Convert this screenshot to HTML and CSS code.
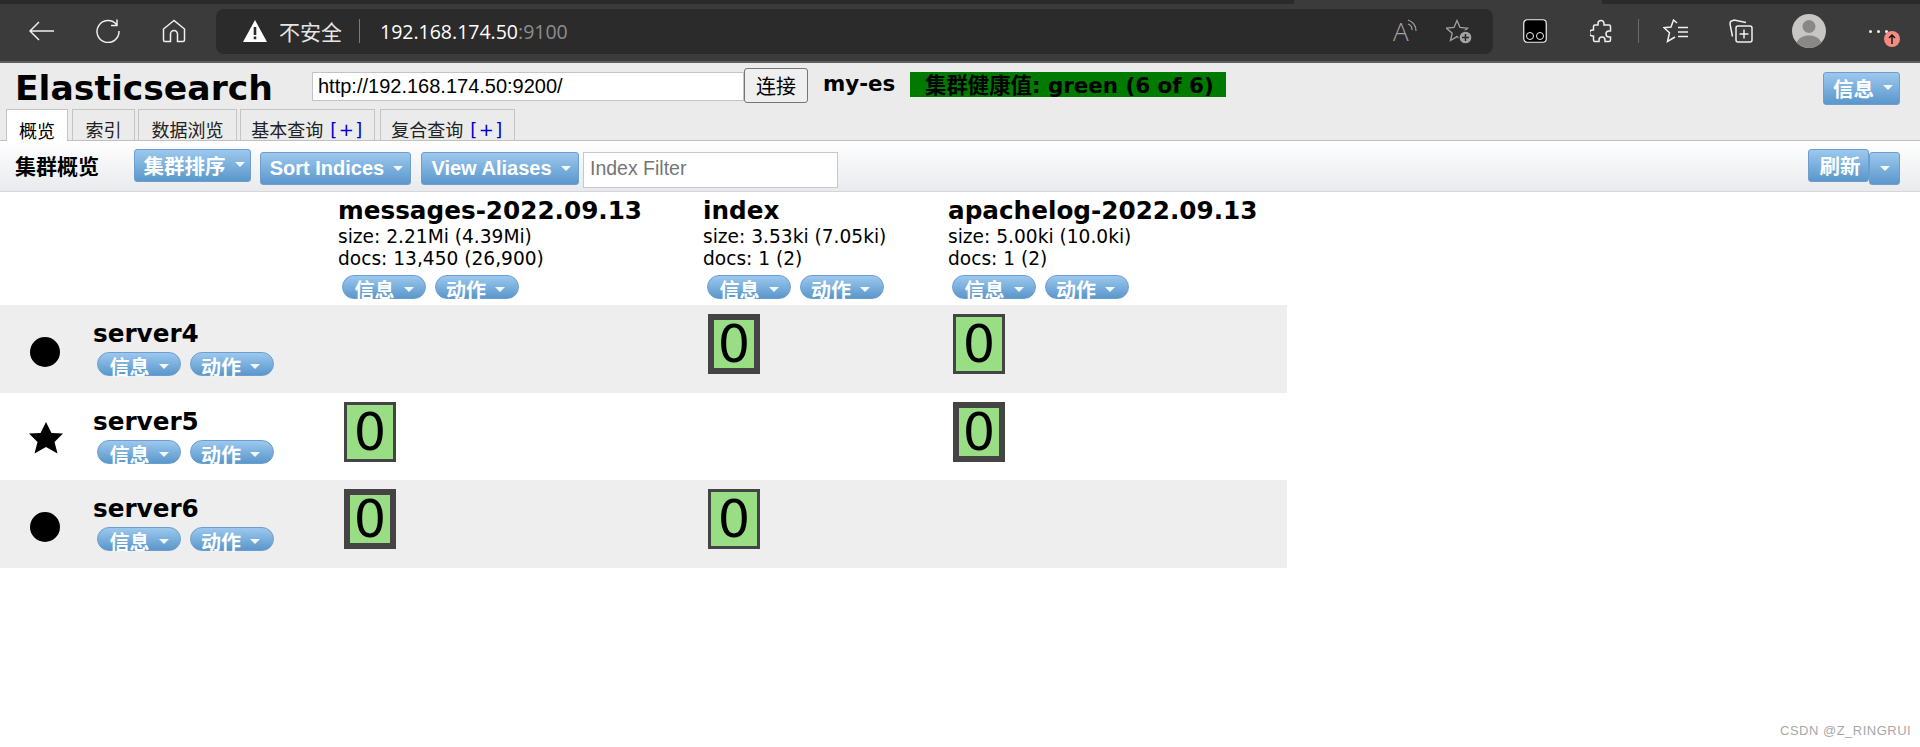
FILE: index.html
```html
<!DOCTYPE html>
<html lang="zh">
<head>
<meta charset="utf-8">
<title>Elasticsearch</title>
<link rel="stylesheet" href="styles.css">
</head>
<body>
<div class="chrome">
  <div class="tabstrip"><div class="strip-left"></div><div class="strip-active"></div><div class="strip-right"></div></div>
  <div class="toolbar">
    <svg class="ic ic-back" viewBox="0 0 25 20"><path d="M10 1 1 10l9 9M1 10h24"/></svg>
    <svg class="ic ic-reload" viewBox="0 0 24 24"><path d="M20.5 5.5A11 11 0 1 0 23 12M21 .5v6h-6"/></svg>
    <svg class="ic ic-home" viewBox="0 0 24 24"><path d="M12 1.5 1.5 10v11a1.5 1.5 0 0 0 1.5 1.5h5.5V15a3.500 3.500 0 0 1 7 0v7.500H21a1.500 1.500 0 0 0 1.500-1.500V10z"/></svg>
    <div class="address">
      <svg class="warn" viewBox="0 0 24 22"><path class="warn-fill" d="M12 0 24 22H0z"/><path class="warn-mark" d="M10.700 7h2.600v8h-2.600zM10.700 16.500h2.600v2.700h-2.600z"/></svg>
      <span class="insecure">不安全</span>
      <span class="addr-sep"></span>
      <span class="url">192.168.174.50<span class="port">:9100</span></span>
      <span class="addr-fill"></span>
      <span class="read-icon"><span class="read-a">A</span><svg class="read-waves" viewBox="0 0 10 14"><path d="M1 1a11 11 0 0 1 8 11M1 5a6 6 0 0 1 4 6"/></svg></span>
      <svg class="ic-dim ic-staradd" viewBox="0 0 26 25"><path d="M11 1.500 14 8.500l7.500.7-5.700 5 1.700 7.300-6.500-3.900-6.500 3.900 1.700-7.300-5.700-5L8 8.500z"/><circle class="badge-dot" cx="19.500" cy="18.500" r="6.500"/><path class="badge-plus" d="M19.500 15v7M16 18.500h7"/></svg>
    </div>
    <svg class="ext ext-eyes" viewBox="0 0 24 24"><rect class="eyes-box" x=".75" y=".75" width="22.500" height="22.500" rx="3.500"/><circle class="eyes-ring" cx="7" cy="17" r="3.500"/><circle class="eyes-ring" cx="17" cy="17" r="3.500"/></svg>
    <svg class="ic ic-puzzle" viewBox="0 0 22 24"><path d="M8 4.500a3 3 0 0 1 6 0V6h5a1.500 1.500 0 0 1 1.500 1.500V12H19a3 3 0 0 0 0 6h1.500v3a1.500 1.500 0 0 1-1.500 1.500h-4V21a3 3 0 0 0-6 0v1.500H5A1.500 1.500 0 0 1 3.500 21v-4H2.500a3 3 0 0 1 0-6h1V7.500A1.500 1.500 0 0 1 5 6h3z"/></svg>
    <span class="tool-sep"></span>
    <svg class="ic ic-favs" viewBox="0 0 25 24"><path d="M14 4 10.500 1 8 8 1 8.700l5.500 5L4.500 22.500l7.500-4.500M15 8.500h10M15 13h10M15 17.500h10"/></svg>
    <svg class="ic ic-coll" viewBox="0 0 24 24"><path d="M17 3.500 5 1 1.500 2.500 1 5l2.500 12.500M9 7h12a2 2 0 0 1 2 2v12a2 2 0 0 1-2 2H9a2 2 0 0 1-2-2V9a2 2 0 0 1 2-2zM15 10.500v9M10.500 15h9"/></svg>
    <svg class="avatar" viewBox="0 0 34 34"><circle class="av-bg" cx="17" cy="17" r="17"/><circle class="av-fg" cx="17" cy="12.500" r="6.500"/><path class="av-fg" d="M4.500 28.500C7 24 11 21.500 17 21.500s10 2.500 12.500 7A17 17 0 0 1 17 34 17 17 0 0 1 4.500 28.500z"/></svg>
    <div class="more">
      <span class="dot"></span><span class="dot"></span><span class="dot"></span>
      <svg class="update" viewBox="0 0 18 16"><circle class="upd-bg" cx="9" cy="8" r="8"/><path class="upd-arrow" d="M9 13V4M6 7l3-3 3 3"/></svg>
    </div>
  </div>
</div>

<header class="head">
  <div class="head-top">
    <h1 class="brand">Elasticsearch</h1>
    <input class="conn-input" type="text" value="http://192.168.174.50:9200/">
    <button class="conn-btn">连接</button>
    <span class="cluster-name">my-es</span>
    <span class="health">集群健康值: green (6 of 6)</span>
    <span class="head-fill"></span>
    <span class="btn btn-cjk btn-info-top">信息<i class="caret"></i></span>
  </div>
  <nav class="tabs">
    <span class="tab tab-1 active">概览</span>
    <span class="tab tab-2">索引</span>
    <span class="tab tab-3">数据浏览</span>
    <span class="tab tab-4">基本查询 <b class="plus">[+]</b></span>
    <span class="tab tab-4 tab-5">复合查询 <b class="plus">[+]</b></span>
  </nav>
</header>

<div class="bar">
  <h2 class="bar-title">集群概览</h2>
  <span class="btn btn-cjk btn-sort">集群排序<i class="caret"></i></span>
  <span class="btn btn-indices">Sort Indices<i class="caret"></i></span>
  <span class="btn btn-alias">View Aliases<i class="caret"></i></span>
  <input class="filter" type="text" placeholder="Index Filter">
  <span class="head-fill"></span>
  <span class="btn btn-cjk btn-refresh">刷新</span>
  <span class="btn btn-refresh-menu"><i class="caret"></i></span>
</div>

<main class="cluster">
  <div class="grid head-row">
    <div></div>
    <div class="idx">
      <h3>messages-2022.09.13</h3>
      <p>size: 2.21Mi (4.39Mi)</p>
      <p>docs: 13,450 (26,900)</p>
      <div class="pills"><span class="pill">信息<i class="caret"></i></span><span class="pill">动作<i class="caret"></i></span></div>
    </div>
    <div class="idx">
      <h3>index</h3>
      <p>size: 3.53ki (7.05ki)</p>
      <p>docs: 1 (2)</p>
      <div class="pills"><span class="pill">信息<i class="caret"></i></span><span class="pill">动作<i class="caret"></i></span></div>
    </div>
    <div class="idx">
      <h3>apachelog-2022.09.13</h3>
      <p>size: 5.00ki (10.0ki)</p>
      <p>docs: 1 (2)</p>
      <div class="pills"><span class="pill">信息<i class="caret"></i></span><span class="pill">动作<i class="caret"></i></span></div>
    </div>
  </div>

  <div class="grid row shade row-a">
    <div class="node">
      <span class="node-ic"><span class="circle"></span></span>
      <div class="node-info"><h3>server4</h3><div class="pills"><span class="pill">信息<i class="caret"></i></span><span class="pill">动作<i class="caret"></i></span></div></div>
    </div>
    <div></div>
    <div><span class="shard primary">0</span></div>
    <div><span class="shard">0</span></div>
  </div>

  <div class="grid row">
    <div class="node">
      <span class="node-ic"><svg class="star" viewBox="0 0 34 32"><path d="M17 0l5.500 11 11.500.5-8.500 8.500 3 11.500L17 25 5.500 31.500l3-11.500L0 11.500 11.500 11z"/></svg></span>
      <div class="node-info"><h3>server5</h3><div class="pills"><span class="pill">信息<i class="caret"></i></span><span class="pill">动作<i class="caret"></i></span></div></div>
    </div>
    <div><span class="shard">0</span></div>
    <div></div>
    <div><span class="shard primary">0</span></div>
  </div>

  <div class="grid row shade row-a">
    <div class="node">
      <span class="node-ic"><span class="circle"></span></span>
      <div class="node-info"><h3>server6</h3><div class="pills"><span class="pill">信息<i class="caret"></i></span><span class="pill">动作<i class="caret"></i></span></div></div>
    </div>
    <div><span class="shard primary">0</span></div>
    <div><span class="shard">0</span></div>
    <div></div>
  </div>
</main>

<div class="watermark">CSDN @Z_RINGRUI</div>
</body>
</html>
```
FILE: styles.css
```css
* { box-sizing: border-box; }
html, body { margin: 0; padding: 0; }
body {
  width: 1920px;
  height: 747px;
  overflow: hidden;
  background: #fff;
  color: #000;
  font-family: "DejaVu Sans", Verdana, "Noto Sans CJK SC", sans-serif;
}

/* browser chrome */
.chrome { height: 63px; background: #3b3b3b; border-bottom: 2px solid #5f5f5f; }
.tabstrip { height: 4px; display: flex; }
.strip-left { width: 1294px; background: #2a2a2a; }
.strip-active { width: 308px; background: #3b3b3b; }
.strip-right { flex: 1; background: #2a2a2a; }
.toolbar { height: 57px; display: flex; align-items: center; position: relative; }
.ic { fill: none; stroke: #f0f0f0; stroke-width: 1.500; flex: none; }
.ic-back { width: 25px; height: 20px; margin: -3px 0 0 29px; }
.ic-reload { width: 24px; height: 24px; margin: -3px 0 0 42px; }
.ic-home { width: 24px; height: 24px; margin: -3px 0 0 42px; }
.address {
  width: 1277px; height: 45px; margin: -3px 0 0 30px;
  background: #2b2b2b; border-radius: 8px;
  display: flex; align-items: center; padding-left: 27px;
}
.warn { width: 24px; height: 22px; flex: none; }
.warn-fill { fill: #fff; }
.warn-mark { fill: #2b2b2b; }
.insecure { margin-left: 12px; font: 21px "Noto Sans CJK SC", sans-serif; color: #e6e6e6; }
.addr-sep { width: 1px; height: 24px; background: #7a7a7a; margin-left: 17px; }
.url { margin-left: 20px; font: 19.500px "Open Sans", sans-serif; color: #fff; }
.port { color: #8d8d8d; }
.addr-fill { flex: 1; }
.read-icon { width: 24px; height: 24px; position: relative; flex: none; }
.read-a { font: 300 26px/24px "Open Sans", sans-serif; color: #a3a3a3; position: absolute; left: 0; top: 0; }
.read-waves { width: 10px; height: 14px; position: absolute; right: 0; top: 0; fill: none; stroke: #a3a3a3; stroke-width: 1.200; }
.ic-dim { fill: none; stroke: #a3a3a3; stroke-width: 1.300; flex: none; }
.ic-staradd { width: 26px; height: 25px; margin: 0 21px 0 29px; }
.badge-dot { fill: #a3a3a3; stroke: #2b2b2b; }
.badge-plus { stroke: #2b2b2b; stroke-width: 1.600; }
.ext-eyes { width: 24px; height: 24px; margin: -3px 0 0 30px; flex: none; }
.eyes-box { fill: #000; stroke: #f0f0f0; stroke-width: 1.200; }
.eyes-ring { fill: none; stroke: #f0f0f0; stroke-width: 1; }
.ic-puzzle { width: 22px; height: 24px; margin: -3px 0 0 43px; }
.tool-sep { width: 1px; height: 24px; background: #6a6a6a; margin: -3px 0 0 26px; flex: none; }
.ic-favs { width: 25px; height: 24px; margin: -3px 0 0 24px; }
.ic-coll { width: 24px; height: 24px; margin: -3px 0 0 41px; }
.avatar { width: 34px; height: 34px; margin: -3px 0 0 39px; flex: none; }
.av-bg { fill: #c8c6c4; }
.av-fg { fill: #8a8886; }
.more { position: relative; width: 32px; height: 20px; margin: -3px 0 0 43px; display: flex; gap: 5px; align-items: center; flex: none; }
.dot { width: 3px; height: 3px; background: #f0f0f0; border-radius: 50%; }
.update { width: 18px; height: 16px; position: absolute; left: 14px; top: 10px; }
.upd-bg { fill: #f28b82; }
.upd-arrow { fill: none; stroke: #111; stroke-width: 1.400; }

/* app header */
.head { height: 78px; background: #ebebeb; border-bottom: 1px solid #c0c0c0; display: flex; flex-direction: column; position: relative; }
.head-top { height: 47px; display: flex; align-items: flex-start; }
.brand { margin: 5px 0 0 15px; width: 297px; font: bold 34.600px/40px "DejaVu Sans", Verdana, sans-serif; }
.conn-input {
  width: 432px; height: 29px; margin-top: 9px; padding: 0 5px;
  border: 1px solid #c4c4c4; background: #fff;
  font: 20px "Liberation Sans", Arial, sans-serif; color: #000;
}
.conn-btn {
  width: 64px; height: 35px; margin-top: 5px; padding: 0;
  border: 1px solid #767676; border-radius: 3px; background: #efefef;
  font: 20px "Noto Sans CJK SC", sans-serif; color: #000;
}
.cluster-name { margin: 9px 0 0 15px; width: 87px; font: bold 21.400px/24px "DejaVu Sans", Verdana, sans-serif; }
.health {
  margin-top: 9px; width: 316px; height: 25px; padding: 1px 0 0 15px;
  background: #007a00; white-space: nowrap;
  font: bold 21.400px/25px "DejaVu Sans", Verdana, "Noto Sans CJK SC", sans-serif;
}
.head-fill { flex: 1; }

.btn {
  display: flex; align-items: center; justify-content: center; flex: none;
  height: 33px; padding: 0 0 1px 2px; color: #fff; white-space: nowrap;
  border: 1px solid #6e9dd2; border-radius: 3px;
  background: linear-gradient(#9cc8ee, #5a97cb);
  font: bold 20px "Liberation Sans", Arial, "Noto Sans CJK SC", sans-serif;
}
.btn-cjk { font-size: 20.500px; padding: 0 0 2px 3px; }
.caret {
  display: inline-block; width: 0; height: 0; margin-left: 9px;
  border-left: 5px solid transparent; border-right: 5px solid transparent;
  border-top: 5.500px solid #fff; opacity: .9;
}
.btn-info-top { width: 77px; margin: 9px 20px 0 0; }
.btn-refresh-menu { padding: 0; }

.tabs { display: flex; height: 31px; padding-left: 6px; align-items: flex-start; }
.tab {
  height: 31px; border: 1px solid #c4c4c4; border-bottom: 0; padding-top: 8px;
  display: flex; align-items: center; justify-content: center; white-space: pre;
  font: 18px "Noto Sans CJK SC", sans-serif; color: #222;
}
.tab.active { background: #fff; height: 32px; position: relative; z-index: 1; color: #000; padding-top: 9px; }
.tab-1 { width: 62px; margin-right: 4px; }
.tab-2 { width: 63px; margin-right: 3px; }
.tab-3 { width: 99px; margin-right: 3px; }
.tab-4 { width: 135px; margin-right: 5px; }
.plus { font: 18px "DejaVu Sans", Verdana, sans-serif; color: #00c; letter-spacing: 1.500px; margin-left: 3px; }

/* second bar */
.bar { height: 51px; border-bottom: 1px solid #d4d6d9; background: linear-gradient(#fff, #e8eaed); display: flex; align-items: flex-start; }
.bar-title { margin: 12px 35px 0 15px; width: 84px; font: bold 21px/24px "Noto Sans CJK SC", sans-serif; white-space: nowrap; }
.btn-sort { width: 117px; margin: 8px 9px 0 0; }
.btn-indices { width: 151px; margin: 11px 10px 0 0; }
.btn-alias { width: 158px; margin: 11px 4px 0 0; }
.filter {
  width: 255px; height: 36px; margin-top: 11px; padding: 0 6px 4px;
  border: 1px solid #c8c8c8; background: #fff;
  font: 19.500px "Liberation Sans", Arial, sans-serif; color: #000;
}
.filter::placeholder { color: #757575; opacity: 1; }
.btn-refresh { width: 61px; margin-top: 8px; }
.btn-refresh-menu { width: 31px; margin: 11px 20px 0 0; }
.btn-refresh-menu .caret { margin-left: 0; }

/* cluster grid */
.cluster { width: 1287px; }
.grid { display: grid; grid-template-columns: 339px 364px 245px 339px; }
.head-row { height: 113px; padding-top: 5px; grid-template-columns: 338px 365px 245px 339px; }
.row { height: 87px; }
.row-a { height: 88px; }
.shade { background: #eee; }
h3 { margin: 0; font: bold 24.700px/28px "DejaVu Sans", Verdana, sans-serif; white-space: nowrap; }
.idx h3 { height: 29px; }
.idx p { margin: 0; font: 18.600px/22px "DejaVu Sans", Verdana, sans-serif; white-space: nowrap; }
.pills { display: flex; gap: 9px; margin: 5px 0 0 4px; }
.pill {
  display: flex; align-items: center; justify-content: center;
  width: 84px; height: 24px; color: #fff;
  border: 1px solid #6e9dd2; border-radius: 12px;
  background: linear-gradient(#9cc8ee, #5a97cb);
  font: bold 20px/17px "Noto Sans CJK SC", sans-serif;
  padding-top: 5px;
}
.pill + .pill { padding-right: 3px; }
.pill .caret { margin: -1px 0 0 9px; }
.node { display: flex; }
.node-ic { width: 93px; flex: none; padding: 32px 0 0 29px; }
.circle { display: block; width: 30px; height: 30px; border-radius: 50%; background: #000; margin-left: 1px; }
.star { display: block; width: 34px; height: 32px; margin-top: -3px; fill: #000; }
.node-info { padding-top: 15px; }
.node-info .pills { margin-top: 4px; }
.shard {
  display: block; width: 52px; height: 60px; margin: 9px 0 0 5px;
  border: 3px solid #444; background: #99de85;
  font: 51px/56px "DejaVu Sans", Verdana, sans-serif; text-align: center;
}
.shard.primary { border-width: 6px; line-height: 50px; }

.watermark {
  position: absolute; left: 1780px; top: 723px;
  font: 13px "Liberation Sans", Arial, sans-serif; color: #a8a8a8; letter-spacing: .5px;
}
```
